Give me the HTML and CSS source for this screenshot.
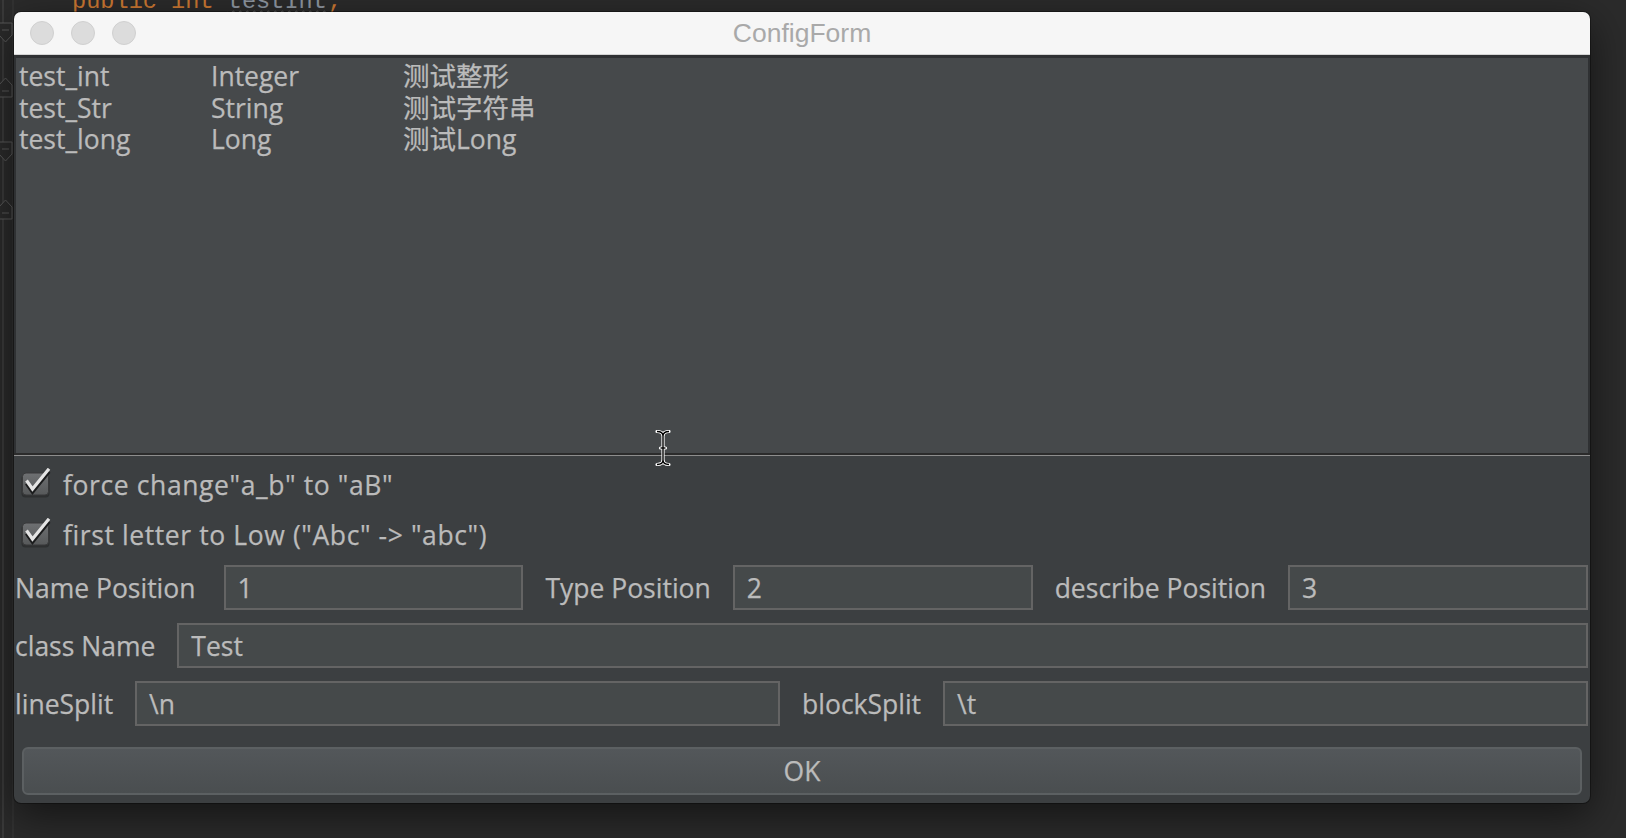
FILE: index.html
```html
<!DOCTYPE html>
<html>
<head>
<meta charset="utf-8">
<link rel="stylesheet" href="styles.css">
</head>
<body>
<div class="ide">
  <svg class="gutter" width="16" height="838" viewBox="0 0 16 838">
    <line x1="3" y1="0" x2="3" y2="838" stroke="#4b4b4b" stroke-width="1"/>
    <line x1="13" y1="0" x2="13" y2="838" stroke="#3a3a3a" stroke-width="1"/>
    <path d="M-1 23 H12 V35 L5.5 42 L-1 35 Z" fill="#2b2b2b" stroke="#5a5a5a" stroke-width="1"/>
    <path d="M2 30 H9" stroke="#5a5a5a" stroke-width="1"/>
    <path d="M5.5 78 L12 85 V97 H-1 V85 Z" fill="#2b2b2b" stroke="#5a5a5a" stroke-width="1"/>
    <path d="M2 91 H9" stroke="#5a5a5a" stroke-width="1"/>
    <path d="M-1 142 H12 V154 L5.5 161 L-1 154 Z" fill="#2b2b2b" stroke="#5a5a5a" stroke-width="1"/>
    <path d="M2 149 H9" stroke="#5a5a5a" stroke-width="1"/>
    <path d="M5.5 200 L12 207 V219 H-1 V207 Z" fill="#2b2b2b" stroke="#5a5a5a" stroke-width="1"/>
    <path d="M2 213 H9" stroke="#5a5a5a" stroke-width="1"/>
  </svg>
  <div class="code"><span class="kw">public int</span> <span class="field">testInt</span><span class="kw">;</span></div>
</div>

<div class="window">
  <div class="titlebar">
    <div class="lights">
      <span class="light"></span><span class="light"></span><span class="light"></span>
    </div>
    <div class="title">ConfigForm</div>
    <div></div>
  </div>

  <div class="scroll">
    <div class="table">
      <div>test_int</div><div>Integer</div><div>测试整形</div>
      <div>test_Str</div><div>String</div><div>测试字符串</div>
      <div>test_long</div><div>Long</div><div>测试Long</div>
    </div>
  </div>
  <div class="splitter"></div>

  <div class="panel">
    <div class="check-row">
      <svg class="checkbox" width="32" height="30" viewBox="0 0 32 30">
        <defs>
          <linearGradient id="cbg" x1="0" y1="0" x2="0" y2="1">
            <stop offset="0" stop-color="#6e7072"/>
            <stop offset="1" stop-color="#57595a"/>
          </linearGradient>
        </defs>
        <rect x="0.5" y="6.5" width="28" height="23" rx="4" fill="#2e3031"/>
        <rect x="1.5" y="5" width="26" height="22" rx="3.5" fill="url(#cbg)" stroke="#38393a" stroke-width="1"/>
        <path d="M5.5 15.5 L11.5 24 L28 3.5" fill="none" stroke="#1b1c1d" stroke-width="3.6" stroke-linejoin="miter"/>
        <path d="M5.5 12.5 L11.5 21 L28 0.8" fill="none" stroke="#e4e4e4" stroke-width="3.2" stroke-linejoin="miter"/>
      </svg>
      <span class="check-text">force change"a_b" to "aB"</span>
    </div>
    <div class="check-row">
      <svg class="checkbox" width="32" height="30" viewBox="0 0 32 30">
        <rect x="0.5" y="6.5" width="28" height="23" rx="4" fill="#2e3031"/>
        <rect x="1.5" y="5" width="26" height="22" rx="3.5" fill="url(#cbg)" stroke="#38393a" stroke-width="1"/>
        <path d="M5.5 15.5 L11.5 24 L28 3.5" fill="none" stroke="#1b1c1d" stroke-width="3.6" stroke-linejoin="miter"/>
        <path d="M5.5 12.5 L11.5 21 L28 0.8" fill="none" stroke="#e4e4e4" stroke-width="3.2" stroke-linejoin="miter"/>
      </svg>
      <span class="check-text">first letter to Low ("Abc" -&gt; "abc")</span>
    </div>

    <div class="field-row">
      <label class="lbl lbl-wide">Name Position</label>
      <div class="input">1</div>
      <label class="lbl">Type Position</label>
      <div class="input">2</div>
      <label class="lbl">describe Position</label>
      <div class="input">3</div>
    </div>
    <div class="field-row">
      <label class="lbl">class Name</label>
      <div class="input">Test</div>
    </div>
    <div class="field-row">
      <label class="lbl">lineSplit</label>
      <div class="input">\n</div>
      <label class="lbl">blockSplit</label>
      <div class="input">\t</div>
    </div>

    <div class="button">OK</div>
  </div>

  <svg class="ibeam" width="20" height="38" viewBox="-10 0 20 38">
    <g fill="none" stroke="#ffffff" stroke-width="3.2" stroke-linecap="round">
      <path d="M-6 1.5 Q0 1.5 0 6 Q0 1.5 6 1.5"/>
      <path d="M0 6 V30"/>
      <path d="M-6 34.5 Q0 34.5 0 30 Q0 34.5 6 34.5"/>
      <path d="M-2.5 18 H2.5"/>
    </g>
    <g fill="none" stroke="#000000" stroke-width="1.4">
      <path d="M-6 1.5 Q0 1.5 0 6 Q0 1.5 6 1.5"/>
      <path d="M0 6 V30"/>
      <path d="M-6 34.5 Q0 34.5 0 30 Q0 34.5 6 34.5"/>
      <path d="M-2.5 18 H2.5"/>
    </g>
  </svg>
</div>
</body>
</html>
```
FILE: styles.css
```css
html, body {
  margin: 0;
  padding: 0;
}
body {
  width: 1626px;
  height: 838px;
  overflow: hidden;
  background: #2b2b2b;
  position: relative;
  padding: 12px 0 0 14px;
  box-sizing: border-box;
  font-family: "Open Sans", "Noto Sans CJK SC", sans-serif;
}

.ide {
  position: absolute;
  left: 0;
  top: 0;
  width: 1626px;
  height: 838px;
  pointer-events: none;
}
.gutter {
  position: absolute;
  left: 0;
  top: 0;
}
.code {
  position: absolute;
  left: 72px;
  top: -10px;
  font-family: "Liberation Mono", monospace;
  font-size: 23.6px;
  line-height: 24px;
  white-space: pre;
}
.kw { color: #cc7832; }
.field {
  color: #8e96a0;
  text-decoration: underline wavy #7a7a7a;
  text-decoration-thickness: 1px;
  text-underline-offset: 2px;
}

.window {
  position: relative;
  width: 1576px;
  border-radius: 7px;
  overflow: hidden;
  background: #3c3f41;
  box-shadow: 0 12px 40px rgba(0, 0, 0, 0.55), 0 0 0 1px rgba(0, 0, 0, 0.35);
}

.titlebar {
  height: 42px;
  background: #f6f6f6;
  border-bottom: 1px solid #d4d4d4;
  display: grid;
  grid-template-columns: 1fr auto 1fr;
  align-items: center;
}
.lights {
  display: flex;
  gap: 17px;
  padding-left: 16px;
}
.light {
  width: 22px;
  height: 22px;
  border-radius: 50%;
  background: #dcdcdc;
  border: 1px solid #d0d0d0;
}
.title {
  font-family: "Liberation Sans", Arial, sans-serif;
  font-size: 26.5px;
  color: #a9a9a9;
  padding-top: 1px;
}

.scroll {
  height: 395px;
  background: #46494b;
  border: 2px solid #2f3133;
  border-top-width: 3px;
  border-bottom: none;
  box-sizing: content-box;
}
.table {
  display: grid;
  grid-template-columns: 192px 192px 192px;
  grid-auto-rows: 31.7px;
  padding: 3px 0 0 3px;
  color: #bbbbbb;
  font-size: 26.5px;
  line-height: 31.7px;
  -webkit-text-stroke: 0.25px #bbbbbb;
}

.splitter {
  height: 2px;
  background: #2b2b2b;
  border-bottom: 1px solid #8d8d8d;
}

.panel {
  padding: 4px 2px 8px 1px;
  color: #bbbbbb;
  font-size: 26.5px;
  -webkit-text-stroke: 0.25px #bbbbbb;
}

.check-row {
  height: 50px;
  display: flex;
  align-items: center;
  padding-left: 6px;
  gap: 10px;
}
.check-text {
  letter-spacing: 0.6px;
}
.checkbox {
  flex: none;
  margin-top: -4px;
}

.field-row {
  display: flex;
  align-items: center;
  gap: 22px;
  height: 45px;
  margin-top: 13px;
}
.check-row + .field-row { margin-top: 5px; }

.lbl {
  flex: none;
  white-space: nowrap;
}
.lbl-wide {
  margin-right: 6px;
}
.input {
  flex: 1 1 0;
  height: 45px;
  box-sizing: border-box;
  background: #45494a;
  border: 2px solid #646464;
  padding: 0 12px;
  display: flex;
  align-items: center;
  color: #bbbbbb;
}

.button {
  margin: 21px 6px 0 7px;
  height: 48px;
  box-sizing: border-box;
  border: 2px solid #5c6062;
  border-radius: 6px;
  background: linear-gradient(#53575a, #4a4e50);
  display: flex;
  align-items: center;
  justify-content: center;
  color: #bbbbbb;
}

.ibeam {
  position: absolute;
  left: 639px;
  top: 418px;
}
```
